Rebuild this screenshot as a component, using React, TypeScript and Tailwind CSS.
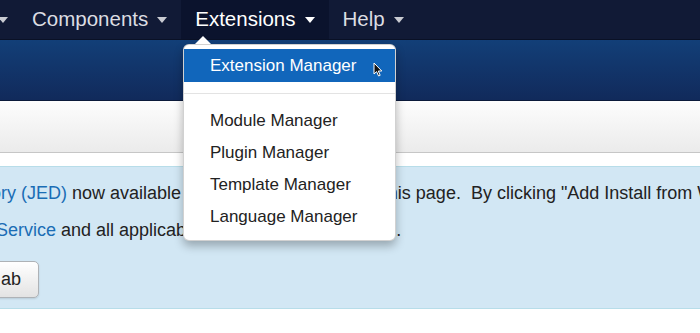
import React from "react";

const Caret = ({ className = "" }: { className?: string }) => (
  <svg width="10" height="6" viewBox="0 0 10 6" className={className}>
    <path d="M0 0 H10 L5 6 Z" fill="currentColor" />
  </svg>
);

// mouse pointer over the hovered item
const Cursor = () => (
  <svg width="10" height="15" viewBox="0 0 10 15" className="absolute left-[189px] top-[13px]">
    <path
      d="M1 1 L1 12 L3.6 9.6 L5.6 14 L7.2 13.3 L5.3 9 L8.8 9 Z"
      fill="#111"
      stroke="#fff"
      strokeWidth="1"
      strokeLinejoin="round"
    />
  </svg>
);

const NavItem = ({ label, active = false }: { label: string; active?: boolean }) => (
  <div
    className={
      active
        ? "flex items-center gap-[9px] h-full px-[14px] bg-[#0b132d] text-white"
        : "flex items-center gap-[9px] h-full px-[14px] text-[#dcdde2]"
    }
  >
    <span>{label}</span>
    <Caret className={active ? "text-white" : "text-[#c9cbd2]"} />
  </div>
);

const menuItems = ["Module Manager", "Plugin Manager", "Template Manager", "Language Manager"];

export default function App() {
  return (
    <div
      className="relative w-[700px] h-[333px] overflow-hidden bg-white"
      style={{ fontFamily: '"Liberation Sans", Arial, sans-serif' }}
    >
      {/* top navbar */}
      <div className="flex items-center h-[40px] bg-[#111a36] text-[20.5px] border-b border-[#0a1126]">
        <div className="flex items-center h-full pr-[10px] text-[#c9cbd2]">
          <Caret className="-ml-[2px]" />
        </div>
        <NavItem label="Components" />
        <NavItem label="Extensions" active />
        <NavItem label="Help" />
      </div>

      {/* blue header band */}
      <div className="h-[61px] bg-gradient-to-b from-[#123f78] to-[#112a5b] border-b border-[#0b1a3a]" />

      {/* toolbar */}
      <div className="h-[52px] bg-gradient-to-b from-[#fdfdfd] to-[#ebebeb] border-b border-[#c6c6c6]" />

      {/* alert */}
      <div className="mt-[13px] h-[143px] bg-[#d2e7f4] border-y border-[#b7dde9] text-[18px] text-[#222]">
        <div className="pt-[16px] whitespace-nowrap leading-[20px] -ml-[56px]">
          <span className="text-[#1a6db5]">Directory (JED)</span> now available with Install from Web on this page.&nbsp;
          By clicking "Add Install from Web tab" below, you agree to the JED Terms of
        </div>
        <div className="pt-[17px] whitespace-nowrap leading-[20px] -ml-[4px]">
          <span className="text-[#1a6db5]">Service</span> and all applicable third party license terms.
        </div>
        <div className="pt-[21px]">
          <div className="-ml-[20px] inline-flex items-center h-[37px] pl-[20px] pr-[17px] rounded-[5px] border border-[#aeb2b6] bg-gradient-to-b from-white to-[#e3e3e3] shadow-[0_1px_2px_rgba(0,0,0,0.12)] text-[#222]">
            ab
          </div>
        </div>
      </div>

      {/* dropdown */}
      <div className="absolute left-[183px] top-[44px] w-[213px]">
        <div className="absolute left-[12px] -top-[8px] w-0 h-0 border-x-[8px] border-x-transparent border-b-[8px] border-b-white" />
        <div className="bg-white rounded-[6px] border border-[rgba(0,0,0,0.18)] shadow-[0_5px_10px_rgba(0,0,0,0.28)] pt-[4px] pb-[7px] text-[17px] text-[#222]">
          <div className="relative flex items-center h-[33px] pl-[26px] bg-[#1166bb] text-white">
            Extension Manager
            <Cursor />
          </div>
          <div className="my-[11px] h-px bg-[#e3e3e3]" />
          {menuItems.map((item) => (
            <div key={item} className="flex items-center h-[32px] pl-[26px]">
              {item}
            </div>
          ))}
        </div>
      </div>
    </div>
  );
}
